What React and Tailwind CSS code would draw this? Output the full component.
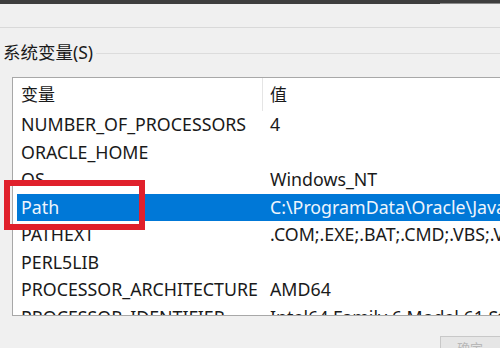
import React from "react";

const rows = [
  { name: "NUMBER_OF_PROCESSORS", value: "4" },
  { name: "ORACLE_HOME", value: "" },
  { name: "OS", value: "Windows_NT" },
  { name: "Path", value: "C:\\ProgramData\\Oracle\\Java\\javapath;C:\\Windows\\system32", selected: true },
  { name: "PATHEXT", value: ".COM;.EXE;.BAT;.CMD;.VBS;.VBE;.JS;.JSE;.WSF;.WSH;.MSC" },
  { name: "PERL5LIB", value: "" },
  { name: "PROCESSOR_ARCHITECTURE", value: "AMD64" },
  { name: "PROCESSOR_IDENTIFIER", value: "Intel64 Family 6 Model 61 Stepping 4, GenuineIntel" },
];

export default function App() {
  return (
    <div className="relative w-[500px] h-[348px] overflow-hidden bg-[#f0f0f0] text-[#1a1a1a] font-['Noto_Sans','Noto_Sans_CJK_SC',sans-serif]">
      <div className="flex h-[4px] bg-[#3e3e3e]">
        <div className="flex-1" />
        <div className="w-[60px] mt-[3px] bg-[#8a8a8a]" />
      </div>
      <div className="h-[24px] border-b border-[#d9d9d9]" />

      <div className="flex items-center h-[49px] pl-[3px] pt-[1px]">
        <span className="text-[17.5px] leading-none">系统变量(S)</span>
        <div className="flex-1 ml-[3px] border-t border-[#dcdcdc]" />
      </div>

      <div className="ml-[12px] w-[520px] h-[239px] bg-white border border-[#a8a8a8] overflow-hidden">
        <div className="flex h-[33px] items-center text-[17px]">
          <div className="w-[249px] pl-[8px] leading-none">变量</div>
          <div className="h-full border-l border-[#e5e5e5]" />
          <div className="pl-[7px] leading-none">值</div>
        </div>
        {rows.map((r) => (
          <div
            key={r.name}
            className={`flex items-center h-[27.5px] ml-[4px] text-[17.8px] whitespace-nowrap ${r.selected ? "bg-[#0078d7] text-[#eef5fd]" : ""}`}
          >
            <div className="w-[245px] pl-[4px] shrink-0 overflow-visible">{r.name}</div>
            <div className="pl-[8px]">{r.value}</div>
          </div>
        ))}
      </div>

      <div className="ml-[440px] mt-[20px] h-[30px] w-[80px] border border-[#c8c8c8] bg-[#e6e6e6] text-[13px] text-[#b8b8b8] pl-[16px] pt-[2px]">
        确定
      </div>

      <div className="absolute left-[4px] top-[180px] w-[141px] h-[50px] border-[6px] border-[#e0202b]" />
    </div>
  );
}
